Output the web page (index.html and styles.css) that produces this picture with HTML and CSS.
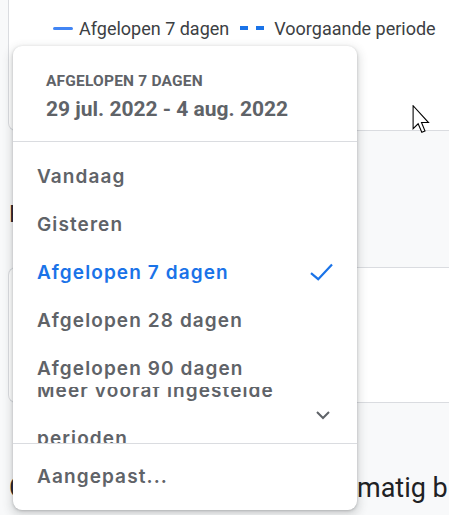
FILE: index.html
```html
<!DOCTYPE html>
<html lang="nl">
<head>
<meta charset="utf-8">
<title>Periode kiezen</title>
<link rel="stylesheet" href="styles.css">
</head>
<body>
<div class="page">
  <section class="card card-chart">
    <div class="legend">
      <span class="legend-line"></span>
      <span class="legend-text">Afgelopen 7 dagen</span>
      <span class="legend-dashes"><span class="dash"></span><span class="dash"></span></span>
      <span class="legend-text">Voorgaande periode</span>
    </div>
  </section>
  <div class="band band-mid">
    <h2 class="section-title">Prestaties</h2>
  </div>
  <section class="card card-summary"></section>
  <div class="band band-low">
    <h2 class="section-title section-title-low">Cijfers zijn automatisch regelmatig bijgewerkt</h2>
  </div>
</div>

<div class="menu" role="menu">
  <div class="menu-header">
    <div class="menu-label">AFGELOPEN 7 DAGEN</div>
    <div class="menu-range">29 jul. 2022 - 4 aug. 2022</div>
  </div>
  <div class="menu-list">
    <div class="menu-item"><span class="item-text">Vandaag</span></div>
    <div class="menu-item"><span class="item-text">Gisteren</span></div>
    <div class="menu-item is-selected"><span class="item-text">Afgelopen 7 dagen</span>
      <svg class="item-icon" viewBox="0 0 24 24" width="24" height="24"><polyline points="2,12.2 9.2,18.2 23,3.6" fill="none" stroke="#1a73e8" stroke-width="2.2"/></svg>
    </div>
    <div class="menu-item"><span class="item-text">Afgelopen 28 dagen</span></div>
    <div class="menu-item"><span class="item-text">Afgelopen 90 dagen</span></div>
    <div class="menu-item menu-item-more"><span class="item-text">Meer vooraf ingestelde perioden</span>
      <svg class="item-icon" viewBox="0 0 24 24" width="24" height="24"><polyline points="8,9 14,15 20,9" fill="none" stroke="#5f6368" stroke-width="2"/></svg>
    </div>
  </div>
  <div class="menu-footer">
    <div class="menu-item"><span class="item-text">Aangepast...</span></div>
  </div>
</div>

<svg class="cursor" viewBox="0 0 12 19" width="19" height="29"><path d="M0.5 0.5 L0.5 15.5 L3.8 12.3 L6.2 17.9 L8.3 17 L6 11.5 L10.6 11.5 Z" fill="#fff" stroke="#000" stroke-width="0.7" stroke-linejoin="miter"/></svg>
</body>
</html>
```
FILE: styles.css
```css
html, body {
  margin: 0;
  padding: 0;
  background: #f8f9fa;
  overflow: hidden;
  height: 515px;
}
body {
  font-family: Roboto, "Liberation Sans", Arial, sans-serif;
  color: #202124;
  position: relative;
}
.page {
  padding-left: 8px;
  width: 480px;
}
.card {
  background: #fff;
  border: 1px solid #dadce0;
  border-right: none;
  box-sizing: border-box;
}
.card-chart {
  border-top: none;
  height: 131px;
  border-radius: 0 0 0 8px;
  padding: 16px 0 0 44px;
}
.legend {
  display: flex;
  align-items: center;
  height: 24px;
  font-size: 18px;
  color: #3c4043;
  white-space: nowrap;
}
.legend-line {
  width: 20px;
  height: 3px;
  border-radius: 2px;
  background: #4285f4;
  margin-right: 6px;
}
.legend-dashes {
  display: flex;
  gap: 8px;
  margin: 0 10px 0 11px;
}
.dash {
  width: 8px;
  height: 4px;
  background: #1a73e8;
}
.band {
  box-sizing: border-box;
}
.band-mid {
  height: 136px;
  padding-top: 67px;
}
.band-low {
  padding-top: 69px;
}
.section-title {
  margin: 0;
  font-weight: 400;
  font-size: 24px;
  line-height: 32px;
  padding-left: 1px;
  white-space: nowrap;
  color: #202124;
}
.section-title-low {
  font-size: 27px;
}
.card-summary {
  height: 136px;
  border-radius: 8px 0 0 8px;
}

.menu {
  position: absolute;
  left: 13px;
  top: 46px;
  width: 344px;
  background: #fff;
  border-radius: 9px;
  box-shadow: 0 1px 3px rgba(60, 64, 67, 0.3), 0 4px 8px 3px rgba(60, 64, 67, 0.15);
  overflow: hidden;
  color: #5f6368;
}
.menu-header {
  padding: 25px 24px 18px 33px;
  border-bottom: 1px solid #dadce0;
}
.menu-label {
  font-weight: 700;
  font-size: 15.5px;
  letter-spacing: 0.2px;
  line-height: 20px;
}
.menu-range {
  margin-top: 4px;
  font-weight: 700;
  font-size: 21px;
  line-height: 28px;
  white-space: nowrap;
}
.menu-list {
  padding-top: 11px;
  border-bottom: 1px solid #dadce0;
}
.menu-item {
  display: flex;
  align-items: center;
  gap: 16px;
  height: 48px;
  padding: 0 24px;
  font-family: Inter, Roboto, sans-serif;
  font-weight: 600;
  font-size: 19px;
  letter-spacing: 1.1px;
  line-height: 48px;
  overflow: hidden;
}
.item-text {
  flex: 1;
  min-width: 0;
}
.item-icon {
  flex: none;
  display: block;
}
.is-selected {
  color: #1a73e8;
}
.menu-item-more {
  height: 56px;
  margin-top: -6px;
}
.menu-footer {
  padding: 9px 0;
}

.cursor {
  position: absolute;
  left: 412px;
  top: 105px;
  display: block;
}
```
